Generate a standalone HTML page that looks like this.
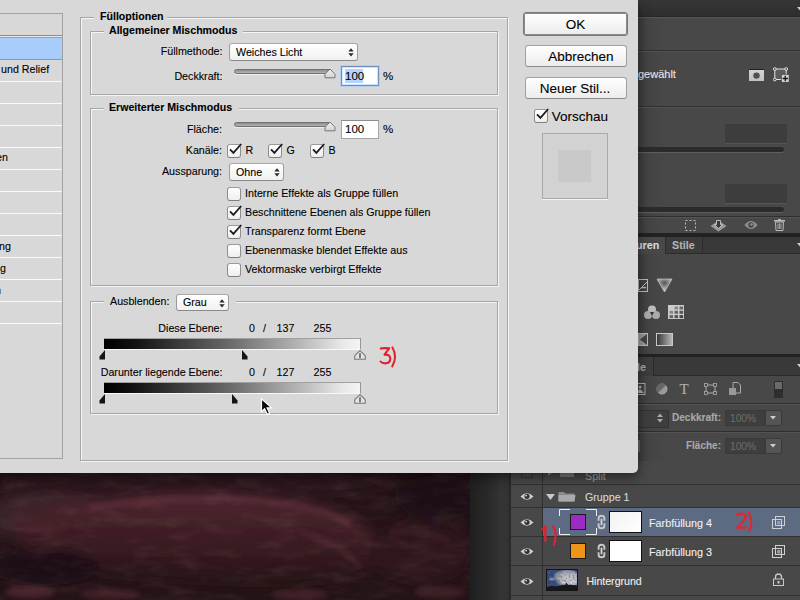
<!DOCTYPE html>
<html><head><meta charset="utf-8"><style>
html,body{margin:0;padding:0;width:800px;height:600px;overflow:hidden;background:#484848;}
body{position:relative;font-family:"Liberation Sans",sans-serif;}
.t{position:absolute;white-space:nowrap;-webkit-text-stroke:0.1px currentColor;}
.r{position:absolute;}
</style></head><body>
<div class="r" style="left:636px;top:0px;width:164px;height:600px;background:linear-gradient(90deg,#3c3c3c 0px,#444 12px,#484848 30px)"></div>
<div class="r" style="left:636px;top:0px;width:164px;height:17px;background:linear-gradient(#363636,#2d2d2d)"></div>
<div class="r" style="left:636px;top:16px;width:164px;height:1px;background:#262626"></div>
<div class="r" style="left:636px;top:17px;width:164px;height:1px;background:#575757"></div>
<div class="r" style="left:636px;top:50px;width:164px;height:1px;background:#2e2e2e"></div>
<div class="r" style="left:636px;top:51px;width:164px;height:1px;background:#545454"></div>
<div class="r" style="left:636px;top:106px;width:164px;height:1px;background:#2e2e2e"></div>
<div class="r" style="left:636px;top:107px;width:164px;height:1px;background:#545454"></div>
<div class="r" style="left:636px;top:216px;width:164px;height:1px;background:#2e2e2e"></div>
<div class="r" style="left:636px;top:217px;width:164px;height:1px;background:#545454"></div>
<svg class="r" style="left:797px;top:7px;" width="7" height="6" viewBox="0 0 7 6"><path d="M0 0 L7 0 L3.5 4 Z" fill="#cfcfcf"/></svg>
<div class="t" style="left:638.00px;top:68.69px;font-size:11px;line-height:11px;font-weight:normal;color:#e6e6e6;font-family:'Liberation Sans', sans-serif;">gewählt</div>
<div class="r" style="left:749px;top:69px;width:15px;height:12px;background:linear-gradient(#d4d4d4,#c2c2c2);border-top:1px solid #222;box-sizing:border-box"></div>
<svg class="r" style="left:752px;top:71px;" width="9" height="9" viewBox="0 0 9 9"><circle cx="4.5" cy="4.6" r="3.2" fill="#505050"/></svg>
<svg class="r" style="left:773px;top:67px;" width="17" height="16" viewBox="0 0 17 16"><rect x="1.8" y="2" width="11.4" height="10.5" fill="#5c5c5c" stroke="#e4e4e4" stroke-width="1"/><circle cx="1.8" cy="2" r="1.4" fill="#484848" stroke="#eee" stroke-width="0.9"/><circle cx="13.2" cy="2" r="1.4" fill="#484848" stroke="#eee" stroke-width="0.9"/><circle cx="1.8" cy="12.5" r="1.4" fill="#484848" stroke="#eee" stroke-width="0.9"/><rect x="8.3" y="7.3" width="7.9" height="8.2" rx="1" fill="#d2d2d2" stroke="#2a2a2a" stroke-width="0.7"/><path d="M12.25 8.8 V14.2 M9.6 11.5 H14.9" stroke="#151515" stroke-width="1.3"/></svg>
<div class="r" style="left:725px;top:124px;width:62px;height:19px;background:#3d3d3d;border-bottom:1px solid #555"></div>
<div class="r" style="left:630px;top:147px;width:154px;height:5px;background:#2b2b2b;border-radius:3px;box-shadow:0 1px 0 #5e5e5e"></div>
<div class="r" style="left:725px;top:184px;width:62px;height:19px;background:#3d3d3d;border-bottom:1px solid #555"></div>
<div class="r" style="left:630px;top:207px;width:154px;height:5px;background:#2b2b2b;border-radius:3px;box-shadow:0 1px 0 #5e5e5e"></div>
<svg class="r" style="left:685px;top:220px;" width="11" height="11" viewBox="0 0 11 11"><rect x="0.5" y="0.5" width="10" height="10" fill="none" stroke="#bbb" stroke-dasharray="2 2"/></svg>
<svg class="r" style="left:710px;top:219px;" width="17" height="13" viewBox="0 0 17 13"><path d="M8.5 1.5 L16.5 7 L8.5 12.5 L0.5 7 Z" fill="#9a9a9a"/><path d="M6.5 1.5 H10.5 V5.5 H12.5 L8.5 9.5 L4.5 5.5 H6.5 Z" fill="#3a3a3a" stroke="#bdbdbd" stroke-width="1"/></svg>
<svg class="r" style="left:744px;top:220px;" width="14" height="10" viewBox="0 0 14 10"><path d="M0.5 5 Q7 -3.2 13.5 5 Q7 13.2 0.5 5Z" fill="#8e8e8e"/><circle cx="7" cy="5" r="2.7" fill="#474747"/><circle cx="7.5" cy="4.5" r="1.3" fill="#8e8e8e"/></svg>
<svg class="r" style="left:774px;top:219px;" width="11" height="12" viewBox="0 0 11 12"><rect x="0" y="1" width="11" height="1.5" fill="#bbb"/><rect x="4" y="0" width="3" height="1.5" fill="#bbb"/><path d="M1.5 3 H9.5 L9 11.5 H2 Z" fill="none" stroke="#bbb"/><path d="M4 4.5 V10 M5.5 4.5 V10 M7 4.5 V10" stroke="#bbb" stroke-width="0.8"/></svg>
<div class="r" style="left:636px;top:233px;width:164px;height:4px;background:#222"></div>
<div class="r" style="left:636px;top:237px;width:164px;height:17px;background:#393939"></div>
<div class="r" style="left:636px;top:253px;width:164px;height:1px;background:#2c2c2c"></div>
<div class="r" style="left:636px;top:237px;width:29px;height:17px;background:#484848"></div>
<div class="r" style="left:665px;top:237px;width:36px;height:16px;background:#3b3b3b;border-left:1px solid #2c2c2c;border-right:1px solid #2c2c2c"></div>
<div class="t" style="left:636.00px;top:239.94px;font-size:10.7px;line-height:10.7px;font-weight:bold;color:#dadada;font-family:'Liberation Sans', sans-serif;">uren</div>
<div class="t" style="left:672.00px;top:239.94px;font-size:10.7px;line-height:10.7px;font-weight:bold;color:#b4b4b4;font-family:'Liberation Sans', sans-serif;">Stile</div>
<svg class="r" style="left:797px;top:243px;" width="7" height="5" viewBox="0 0 7 5"><path d="M0 0 L7 0 L3.5 4 Z" fill="#cfcfcf"/></svg>
<svg class="r" style="left:638px;top:279px;overflow:hidden" width="10" height="13" viewBox="0 0 10 13"><rect x="0.5" y="0.5" width="9" height="12" fill="none" stroke="#bbb"/><path d="M1 11 L9 3" stroke="#bbb"/><rect x="3" y="8" width="5" height="1.3" fill="#bbb"/></svg>
<svg class="r" style="left:656px;top:278px;" width="17" height="15" viewBox="0 0 17 15"><defs><radialGradient id="tg" cx="0.5" cy="0.3" r="0.6"><stop offset="0" stop-color="#555"/><stop offset="1" stop-color="#ccc"/></radialGradient></defs><path d="M1 1 H16 L8.5 14 Z" fill="url(#tg)" stroke="#bbb" stroke-width="0.8"/></svg>
<svg class="r" style="left:643px;top:305px;" width="18" height="15" viewBox="0 0 18 15"><circle cx="9" cy="4.5" r="4" fill="#bbb"/><circle cx="5" cy="10" r="4" fill="#aaa"/><circle cx="13" cy="10" r="4" fill="#aaa"/><path d="M7 7 L11 7 L9 11 Z" fill="#333"/></svg>
<svg class="r" style="left:668px;top:305px;" width="16" height="14" viewBox="0 0 16 14"><rect x="0.5" y="0.5" width="15" height="13" fill="#d0d0d0" stroke="#ccc"/><rect x="1.5" y="1.5" width="3.6" height="3" fill="#c8c8c8"/><rect x="1.5" y="5.8" width="3.6" height="3" fill="#888"/><rect x="1.5" y="10.1" width="3.6" height="3" fill="#666"/><rect x="6.5" y="1.5" width="3.6" height="3" fill="#888"/><rect x="6.5" y="5.8" width="3.6" height="3" fill="#666"/><rect x="6.5" y="10.1" width="3.6" height="3" fill="#555"/><rect x="11.5" y="1.5" width="3.6" height="3" fill="#666"/><rect x="11.5" y="5.8" width="3.6" height="3" fill="#555"/><rect x="11.5" y="10.1" width="3.6" height="3" fill="#444"/></svg>
<svg class="r" style="left:638px;top:333px;overflow:hidden" width="10" height="13" viewBox="0 0 10 13"><rect x="0.5" y="0.5" width="9" height="12" fill="#999" stroke="#bbb"/><path d="M9 1 L2 6.5 L9 12 Z" fill="#444"/></svg>
<svg class="r" style="left:656px;top:333px;" width="17" height="13" viewBox="0 0 17 13"><defs><linearGradient id="gg" x1="0" x2="1"><stop offset="0" stop-color="#333"/><stop offset="1" stop-color="#bbb"/></linearGradient></defs><rect x="0.5" y="0.5" width="16" height="12" fill="url(#gg)" stroke="#c8c8c8"/></svg>
<div class="r" style="left:636px;top:354px;width:164px;height:3px;background:#222"></div>
<div class="r" style="left:636px;top:357px;width:164px;height:19px;background:#393939"></div>
<div class="r" style="left:636px;top:375px;width:164px;height:1px;background:#2a2a2a"></div>
<div class="r" style="left:636px;top:357px;width:17px;height:19px;background:#3d3d3d;border-right:1px solid #2a2a2a"></div>
<div class="t" style="right:154.00px;top:361.94px;font-size:10.7px;line-height:10.7px;font-weight:bold;color:#a8a8a8;text-align:right;font-family:'Liberation Sans', sans-serif;">Stile</div>
<svg class="r" style="left:797px;top:364px;" width="7" height="5" viewBox="0 0 7 5"><path d="M0 0 L7 0 L3.5 4 Z" fill="#cfcfcf"/></svg>
<svg class="r" style="left:638px;top:383px;" width="8" height="12" viewBox="0 0 8 12"><rect x="-5" y="0.5" width="12" height="11" fill="none" stroke="#aaa"/><circle cx="2" cy="4" r="1.5" fill="#aaa"/><path d="M-3 10 L2 6 L6 10Z" fill="#aaa"/></svg>
<svg class="r" style="left:656px;top:383px;" width="12" height="12" viewBox="0 0 12 12"><circle cx="6" cy="6" r="5" fill="#999" stroke="#aaa"/><path d="M10 2 L2 10 A5 5 0 0 1 10 2Z" fill="#666"/></svg>
<div class="t" style="left:679.50px;top:381.80px;font-size:15px;line-height:15px;font-weight:normal;color:#b0b0b0;font-family:'Liberation Serif', serif;">T</div>
<svg class="r" style="left:704px;top:383px;" width="13" height="12" viewBox="0 0 13 12"><rect x="2" y="2" width="9" height="8" fill="none" stroke="#aaa"/><rect x="0.5" y="0.5" width="3" height="3" fill="#484848" stroke="#aaa" stroke-width="0.8"/><rect x="0.5" y="8.5" width="3" height="3" fill="#484848" stroke="#aaa" stroke-width="0.8"/><rect x="9.5" y="0.5" width="3" height="3" fill="#484848" stroke="#aaa" stroke-width="0.8"/><rect x="9.5" y="8.5" width="3" height="3" fill="#484848" stroke="#aaa" stroke-width="0.8"/></svg>
<svg class="r" style="left:729px;top:382px;" width="12" height="13" viewBox="0 0 12 13"><path d="M4 0.5 H9 L11.5 3 V11 H4 Z" fill="none" stroke="#aaa"/><rect x="0" y="6" width="7" height="7" fill="#999"/></svg>
<div class="r" style="left:774px;top:381px;width:9px;height:17px;background:#2e2e2e;border-radius:1px"></div>
<div class="r" style="left:775px;top:382px;width:7px;height:7px;background:#6a6a6a"></div>
<div class="r" style="left:636px;top:403px;width:164px;height:1px;background:#2e2e2e"></div>
<div class="r" style="left:636px;top:404px;width:164px;height:1px;background:#535353"></div>
<div class="r" style="left:636px;top:431px;width:164px;height:1px;background:#2e2e2e"></div>
<div class="r" style="left:636px;top:432px;width:164px;height:1px;background:#535353"></div>
<div class="r" style="left:636px;top:461px;width:164px;height:1px;background:#2e2e2e"></div>
<div class="r" style="left:636px;top:462px;width:164px;height:1px;background:#535353"></div>
<div class="r" style="left:630px;top:410px;width:37px;height:16px;background:#3e3e3e;border:1px solid #333;border-radius:2px"></div>
<svg class="r" style="left:657px;top:413px;" width="6" height="10" viewBox="0 0 6 10"><path d="M0 4 L3 0.5 L6 4 Z M0 6 L3 9.5 L6 6 Z" fill="#aaa"/></svg>
<div class="t" style="right:79.00px;top:412.54px;font-size:10px;line-height:10px;font-weight:bold;color:#a9a9a9;text-align:right;font-family:'Liberation Sans', sans-serif;">Deckkraft:</div>
<div class="r" style="left:725px;top:410px;width:40px;height:16px;background:#3e3e3e;border:1px solid #3a3a3a;box-sizing:border-box"></div>
<div class="r" style="left:765px;top:410px;width:17px;height:16px;background:#555;border:1px solid #3a3a3a;box-sizing:border-box;border-radius:0 2px 2px 0"></div>
<svg class="r" style="left:770px;top:416px;" width="7" height="4" viewBox="0 0 7 4"><path d="M0 0 H6 L3 3.5Z" fill="#ccc"/></svg>
<div class="r" style="left:725px;top:438px;width:40px;height:16px;background:#3e3e3e;border:1px solid #3a3a3a;box-sizing:border-box"></div>
<div class="r" style="left:765px;top:438px;width:17px;height:16px;background:#555;border:1px solid #3a3a3a;box-sizing:border-box;border-radius:0 2px 2px 0"></div>
<svg class="r" style="left:770px;top:444px;" width="7" height="4" viewBox="0 0 7 4"><path d="M0 0 H6 L3 3.5Z" fill="#ccc"/></svg>
<div class="t" style="left:730.00px;top:413.87px;font-size:10.2px;line-height:10.2px;font-weight:normal;color:#6b6b6b;font-family:'Liberation Sans', sans-serif;">100%</div>
<div class="t" style="right:79.00px;top:440.54px;font-size:10px;line-height:10px;font-weight:bold;color:#a9a9a9;text-align:right;font-family:'Liberation Sans', sans-serif;">Fläche:</div>
<div class="t" style="left:730.00px;top:441.87px;font-size:10.2px;line-height:10.2px;font-weight:normal;color:#6b6b6b;font-family:'Liberation Sans', sans-serif;">100%</div>
<div class="r" style="left:636px;top:440px;width:4px;height:12px;background:#666"></div>
<div class="r" style="left:470px;top:472px;width:40px;height:128px;background:linear-gradient(90deg,#1f1f1f,#292929 45%,#353535 80%,#333 95%,#2a2a2a)"></div>
<div class="r" style="left:509px;top:461px;width:2px;height:139px;background:#2a2a2a"></div>
<div class="r" style="left:511px;top:461px;width:289px;height:139px;background:#484848"></div>
<div class="r" style="left:511px;top:484px;width:289px;height:1px;background:#303030"></div>
<div class="r" style="left:511px;top:507px;width:289px;height:1px;background:#303030"></div>
<div class="r" style="left:511px;top:536px;width:289px;height:1px;background:#303030"></div>
<div class="r" style="left:511px;top:565px;width:289px;height:1px;background:#303030"></div>
<div class="r" style="left:511px;top:595px;width:289px;height:1px;background:#303030"></div>
<div class="r" style="left:542px;top:461px;width:1px;height:139px;background:#303030"></div>
<div class="r" style="left:543px;top:508px;width:257px;height:28px;background:#5c6b82"></div>
<div class="r" style="left:521px;top:466px;width:12px;height:12px;border:1px solid #333;box-sizing:border-box"></div>
<svg class="r" style="left:548px;top:467px;" width="7" height="9" viewBox="0 0 7 9"><path d="M0 0 L6 4.5 L0 9Z" fill="#888"/></svg>
<div class="r" style="left:560px;top:467px;width:14px;height:10px;background:#7a7a7a"></div>
<div class="t" style="left:585.00px;top:470.94px;font-size:10.7px;line-height:10.7px;font-weight:normal;color:#a0a0a0;font-family:'Liberation Sans', sans-serif;">Split</div>
<svg class="r" style="left:520px;top:492px;" width="14" height="9" viewBox="0 0 14 9"><path d="M0.5 4.5 Q7 -2 13.5 4.5 Q7 11 0.5 4.5Z" fill="#d0d0d0"/><circle cx="7" cy="4.3" r="2.6" fill="#333"/><circle cx="6.2" cy="3.6" r="0.9" fill="#ddd"/></svg>
<svg class="r" style="left:520px;top:518px;" width="14" height="9" viewBox="0 0 14 9"><path d="M0.5 4.5 Q7 -2 13.5 4.5 Q7 11 0.5 4.5Z" fill="#d0d0d0"/><circle cx="7" cy="4.3" r="2.6" fill="#333"/><circle cx="6.2" cy="3.6" r="0.9" fill="#ddd"/></svg>
<svg class="r" style="left:520px;top:547px;" width="14" height="9" viewBox="0 0 14 9"><path d="M0.5 4.5 Q7 -2 13.5 4.5 Q7 11 0.5 4.5Z" fill="#d0d0d0"/><circle cx="7" cy="4.3" r="2.6" fill="#333"/><circle cx="6.2" cy="3.6" r="0.9" fill="#ddd"/></svg>
<svg class="r" style="left:520px;top:577px;" width="14" height="9" viewBox="0 0 14 9"><path d="M0.5 4.5 Q7 -2 13.5 4.5 Q7 11 0.5 4.5Z" fill="#d0d0d0"/><circle cx="7" cy="4.3" r="2.6" fill="#333"/><circle cx="6.2" cy="3.6" r="0.9" fill="#ddd"/></svg>
<svg class="r" style="left:546px;top:494px;" width="9" height="6" viewBox="0 0 9 6"><path d="M0 0 H9 L4.5 6Z" fill="#c8c8c8"/></svg>
<svg class="r" style="left:558px;top:490px;" width="18" height="12" viewBox="0 0 18 12"><path d="M0.5 2 H6 L7.5 3.5 H16.5 V11.5 H0.5Z" fill="#8a8a8a"/><path d="M0.5 5 H17.5 L16.5 11.5 H0.5Z" fill="#a9a9a9"/></svg>
<div class="t" style="left:585.00px;top:491.94px;font-size:10.7px;line-height:10.7px;font-weight:normal;color:#d6d6d6;font-family:'Liberation Sans', sans-serif;">Gruppe 1</div>
<svg class="r" style="left:559px;top:509px;" width="38" height="26" viewBox="0 0 38 26"><path d="M0.5 7 V0.5 H11 M27 0.5 H37.5 V7 M37.5 19 V25.5 H27 M11 25.5 H0.5 V19" fill="none" stroke="#eee" stroke-width="1"/></svg>
<div class="r" style="left:570px;top:514px;width:16px;height:16px;background:#9b2bc4;border:1px solid #1a1a1a;box-sizing:border-box"></div>
<svg class="r" style="left:596.5px;top:514px;" width="9" height="16" viewBox="0 0 9 16"><path d="M1.6 6.8 V4.6 A2.9 2.9 0 0 1 7.4 4.6 V6.8 M1.6 9.2 V11.4 A2.9 2.9 0 0 0 7.4 11.4 V9.2" fill="none" stroke="#c9c9c9" stroke-width="1.9"/><rect x="3.6" y="4.6" width="1.8" height="6.8" rx="0.9" fill="#d8d8d8"/></svg>
<div class="r" style="left:609px;top:511px;width:33px;height:22px;background:linear-gradient(135deg,#f2f2f2,#ffffff);border:1px solid #111;box-sizing:border-box"></div>
<div class="t" style="left:649.00px;top:517.86px;font-size:10.8px;line-height:10.8px;font-weight:normal;color:#f0f0f0;font-family:'Liberation Sans', sans-serif;">Farbfüllung 4</div>
<div class="r" style="left:570px;top:543px;width:16px;height:16px;background:#ee9418;border:1px solid #1a1a1a;box-sizing:border-box"></div>
<svg class="r" style="left:596.5px;top:543px;" width="9" height="16" viewBox="0 0 9 16"><path d="M1.6 6.8 V4.6 A2.9 2.9 0 0 1 7.4 4.6 V6.8 M1.6 9.2 V11.4 A2.9 2.9 0 0 0 7.4 11.4 V9.2" fill="none" stroke="#c9c9c9" stroke-width="1.9"/><rect x="3.6" y="4.6" width="1.8" height="6.8" rx="0.9" fill="#d8d8d8"/></svg>
<div class="r" style="left:609px;top:540px;width:33px;height:22px;background:#fff;border:1px solid #111;box-sizing:border-box"></div>
<div class="t" style="left:649.00px;top:546.86px;font-size:10.8px;line-height:10.8px;font-weight:normal;color:#f0f0f0;font-family:'Liberation Sans', sans-serif;">Farbfüllung 3</div>
<svg class="r" style="left:772px;top:516px;" width="13" height="13" viewBox="0 0 13 13"><rect x="0.5" y="3.5" width="9" height="9" fill="none" stroke="#d0d0d0"/><rect x="3.5" y="0.5" width="9" height="9" fill="none" stroke="#d0d0d0"/><rect x="5" y="5" width="3.5" height="3.5" fill="#9a9a9a"/></svg>
<svg class="r" style="left:772px;top:545px;" width="13" height="13" viewBox="0 0 13 13"><rect x="0.5" y="3.5" width="9" height="9" fill="none" stroke="#d0d0d0"/><rect x="3.5" y="0.5" width="9" height="9" fill="none" stroke="#d0d0d0"/><rect x="5" y="5" width="3.5" height="3.5" fill="#9a9a9a"/></svg>
<svg class="r" style="left:547px;top:570px" width="30" height="20" viewBox="0 0 30 20"><defs><radialGradient id="sun" cx="0.6" cy="0.5" r="0.5"><stop offset="0" stop-color="#f8f8f8"/><stop offset="0.6" stop-color="#c2c4c8"/><stop offset="1" stop-color="#a0a4ac" stop-opacity="0"/></radialGradient><filter id="tb"><feGaussianBlur stdDeviation="0.6"/></filter><filter id="cn"><feTurbulence type="fractalNoise" baseFrequency="0.5" numOctaves="2" seed="5"/><feColorMatrix values="0 0 0 0 0.12  0 0 0 0 0.14  0 0 0 0 0.2  0 0 0 3 -1.3"/></filter></defs><rect width="30" height="20" fill="#2f4677"/><g filter="url(#tb)"><ellipse cx="19" cy="9" rx="15" ry="10" fill="url(#sun)"/><ellipse cx="19" cy="6" rx="12" ry="6" fill="#a9abb0" opacity="0.6"/><ellipse cx="5" cy="9" rx="3" ry="1.5" fill="#9aa5c0" opacity="0.7"/></g><rect width="30" height="20" filter="url(#cn)" opacity="0.6"/><path d="M0 17 Q5 15.5 9 16.5 Q14 14.5 18 15 L19.5 12.5 L21 14.8 Q26 14.5 30 15.5 V20 H0Z" fill="#17181b"/></svg>
<div class="r" style="left:546px;top:569px;width:32px;height:22px;border:1px solid #141414;box-sizing:border-box"></div>
<div class="t" style="left:586.40px;top:575.53px;font-size:10.6px;line-height:10.6px;font-weight:normal;color:#f0f0f0;font-family:'Liberation Sans', sans-serif;">Hintergrund</div>
<svg class="r" style="left:773px;top:573px;" width="11" height="13" viewBox="0 0 11 13"><path d="M2.5 6 V4 A3 3 0 0 1 8.5 4 V6" fill="none" stroke="#c8c8c8" stroke-width="1.3"/><rect x="0.5" y="6" width="10" height="6.5" fill="none" stroke="#c8c8c8"/><rect x="4.5" y="8" width="2" height="2.5" fill="#c8c8c8"/></svg>
<svg class="r" style="left:730px;top:508px;" width="26" height="28" viewBox="0 0 26 28"><path d="M7 7 Q10 5.3 12.8 5.8 Q16 6.5 15.6 9.8 Q15 12.8 7 19.6 H16" fill="none" stroke="#e8232b" stroke-width="2.2" stroke-linecap="round" stroke-linejoin="round"/><path d="M18.9 4.6 Q23.6 13.5 19.4 23.2" fill="none" stroke="#e8232b" stroke-width="2" stroke-linecap="round"/></svg>
<svg class="r" style="left:536px;top:520px;" width="26" height="28" viewBox="0 0 26 28"><path d="M6.3 9.3 Q8.3 7.3 9.3 6.6 V21" fill="none" stroke="#e4202a" stroke-width="2.3" stroke-linecap="round" stroke-linejoin="round"/><path d="M17 6.3 Q21.8 13 18 24.8" fill="none" stroke="#e4202a" stroke-width="2.2" stroke-linecap="round"/></svg>
<svg class="r" style="left:0;top:472px" width="470" height="128" viewBox="0 0 470 128"><defs><filter id="bl" x="-20%" y="-50%" width="140%" height="200%"><feGaussianBlur stdDeviation="6"/></filter><filter id="bl2" x="-20%" y="-50%" width="140%" height="200%"><feGaussianBlur stdDeviation="2.5"/></filter><linearGradient id="rk" x1="0" y1="0" x2="0" y2="1"><stop offset="0" stop-color="#4f2731"/><stop offset="0.5" stop-color="#3b1d23"/><stop offset="1" stop-color="#261418"/></linearGradient><filter id="nz"><feTurbulence type="fractalNoise" baseFrequency="0.03 0.09" numOctaves="4" seed="3"/><feColorMatrix values="0 0 0 0 0.33  0 0 0 0 0.17  0 0 0 0 0.18  0 0 0 2.4 -1.1"/></filter></defs><rect width="470" height="128" fill="#251417"/><g filter="url(#bl)"><ellipse cx="200" cy="10" rx="200" ry="16" fill="#2c171b"/><ellipse cx="50" cy="45" rx="70" ry="25" fill="#392026"/><path d="M20 40 Q90 26 170 22 Q260 20 330 36 Q380 52 385 85 Q370 110 280 112 Q160 110 80 100 Q30 90 20 70Z" fill="url(#rk)"/><ellipse cx="420" cy="80" rx="50" ry="30" fill="#2e191d"/><ellipse cx="440" cy="25" rx="45" ry="22" fill="#1a0f12"/><ellipse cx="45" cy="95" rx="55" ry="18" fill="#1d1014"/></g><g filter="url(#bl2)" opacity="0.9"><path d="M90 36 Q170 24 250 28 Q320 34 350 52" fill="none" stroke="#5b2e38" stroke-width="5"/><path d="M300 60 Q340 70 360 95" fill="none" stroke="#4f2932" stroke-width="4"/><path d="M390 60 Q420 55 450 70" fill="none" stroke="#44232a" stroke-width="4"/><ellipse cx="30" cy="120" rx="25" ry="6" fill="#4b262e"/><ellipse cx="110" cy="122" rx="30" ry="5" fill="#46242b"/><ellipse cx="300" cy="123" rx="28" ry="5" fill="#44232a"/><ellipse cx="440" cy="120" rx="25" ry="6" fill="#3f2026"/><ellipse cx="40" cy="55" rx="30" ry="6" fill="#47242b"/></g><rect width="470" height="128" filter="url(#nz)" opacity="0.14"/></svg>
<div class="r" style="left:0px;top:0px;width:638px;height:473px;background:#d8d8d8;border-bottom-right-radius:5px;box-shadow:0 4px 12px rgba(0,0,0,0.5)"></div>
<div class="r" style="left:-2px;top:13px;width:65px;height:446px;border:1px solid #a2a2a2;box-sizing:border-box"></div>
<div class="r" style="left:0px;top:35px;width:62px;height:1px;background:#8e8e8e"></div>
<div class="r" style="left:0px;top:36px;width:62px;height:1px;background:#e6e6e6"></div>
<div class="r" style="left:0px;top:37px;width:62px;height:1px;background:#84a6d6"></div>
<div class="r" style="left:0px;top:38px;width:62px;height:21px;background:#a8cdfa"></div>
<div class="r" style="left:0px;top:59px;width:62px;height:1px;background:#7c9bc8"></div>
<div class="r" style="left:0px;top:81px;width:62px;height:1px;background:#fafafa"></div>
<div class="r" style="left:0px;top:103px;width:62px;height:1px;background:#fafafa"></div>
<div class="r" style="left:0px;top:125px;width:62px;height:1px;background:#fafafa"></div>
<div class="r" style="left:0px;top:147px;width:62px;height:1px;background:#fafafa"></div>
<div class="r" style="left:0px;top:169px;width:62px;height:1px;background:#fafafa"></div>
<div class="r" style="left:0px;top:191px;width:62px;height:1px;background:#fafafa"></div>
<div class="r" style="left:0px;top:213px;width:62px;height:1px;background:#fafafa"></div>
<div class="r" style="left:0px;top:235px;width:62px;height:1px;background:#fafafa"></div>
<div class="r" style="left:0px;top:257px;width:62px;height:1px;background:#fafafa"></div>
<div class="r" style="left:0px;top:279px;width:62px;height:1px;background:#fafafa"></div>
<div class="r" style="left:0px;top:301px;width:62px;height:1px;background:#fafafa"></div>
<div class="r" style="left:0px;top:323px;width:62px;height:1px;background:#fafafa"></div>
<div class="t" style="left:1.00px;top:63.94px;font-size:10.7px;line-height:10.7px;font-weight:normal;color:#000;font-family:'Liberation Sans', sans-serif;">und Relief</div>
<div class="t" style="right:792.00px;top:151.94px;font-size:10.7px;line-height:10.7px;font-weight:normal;color:#000;text-align:right;font-family:'Liberation Sans', sans-serif;">Schatten nach innen</div>
<div class="t" style="right:789.00px;top:240.94px;font-size:10.7px;line-height:10.7px;font-weight:normal;color:#000;text-align:right;font-family:'Liberation Sans', sans-serif;">Farbüberlagerung</div>
<div class="t" style="right:794.00px;top:262.94px;font-size:10.7px;line-height:10.7px;font-weight:normal;color:#000;text-align:right;font-family:'Liberation Sans', sans-serif;">Verlaufsüberlagerung</div>
<div class="t" style="right:799.00px;top:284.94px;font-size:10.7px;line-height:10.7px;font-weight:normal;color:#000;text-align:right;font-family:'Liberation Sans', sans-serif;">Schlagschatten</div>
<div class="r" style="left:81px;top:18px;width:428px;height:444px;border:1px solid #f6f6f6;box-sizing:border-box"></div>
<div class="r" style="left:80px;top:17px;width:428px;height:444px;border:1px solid #a6a6a6;box-sizing:border-box"></div>
<div class="r" style="left:94px;top:16px;width:73px;height:4px;background:#d8d8d8"></div>
<div class="t" style="left:100.00px;top:11.03px;font-size:10.6px;line-height:10.6px;font-weight:bold;color:#000;font-family:'Liberation Sans', sans-serif;">Fülloptionen</div>
<div class="r" style="left:91px;top:32px;width:408px;height:64px;border:1px solid #f6f6f6;box-sizing:border-box"></div>
<div class="r" style="left:90px;top:31px;width:408px;height:64px;border:1px solid #a6a6a6;box-sizing:border-box"></div>
<div class="r" style="left:104px;top:30px;width:139px;height:4px;background:#d8d8d8"></div>
<div class="t" style="left:109.00px;top:25.03px;font-size:10.6px;line-height:10.6px;font-weight:bold;color:#000;font-family:'Liberation Sans', sans-serif;">Allgemeiner Mischmodus</div>
<div class="r" style="left:91px;top:109px;width:408px;height:178px;border:1px solid #f6f6f6;box-sizing:border-box"></div>
<div class="r" style="left:90px;top:108px;width:408px;height:178px;border:1px solid #a6a6a6;box-sizing:border-box"></div>
<div class="r" style="left:104px;top:107px;width:135px;height:4px;background:#d8d8d8"></div>
<div class="t" style="left:109.00px;top:102.03px;font-size:10.6px;line-height:10.6px;font-weight:bold;color:#000;font-family:'Liberation Sans', sans-serif;">Erweiterter Mischmodus</div>
<div class="r" style="left:91px;top:302px;width:408px;height:113px;border:1px solid #f6f6f6;box-sizing:border-box"></div>
<div class="r" style="left:90px;top:301px;width:408px;height:113px;border:1px solid #a6a6a6;box-sizing:border-box"></div>
<div class="r" style="left:104px;top:300px;width:132px;height:4px;background:#d8d8d8"></div>
<div class="t" style="right:577.50px;top:45.94px;font-size:10.7px;line-height:10.7px;font-weight:normal;color:#000;text-align:right;font-family:'Liberation Sans', sans-serif;">Füllmethode:</div>
<div class="r" style="left:229px;top:43px;width:129px;height:18px;border:1px solid #9b9b9b;border-top-color:#a8a8a8;border-bottom-color:#8a8a8a;border-radius:3px;box-sizing:border-box;background:linear-gradient(#ffffff,#f1f1f1)"></div>
<div class="t" style="left:236.00px;top:46.64px;font-size:10.7px;line-height:10.7px;font-weight:normal;color:#000;font-family:'Liberation Sans', sans-serif;">Weiches Licht</div>
<svg class="r" style="left:347.5px;top:47.5px;" width="6" height="9" viewBox="0 0 6 9"><path d="M0.3 3.4 L3 0.2 L5.7 3.4Z M0.3 5.3 L3 8.5 L5.7 5.3Z" fill="#2a2a2a"/></svg>
<div class="t" style="right:577.50px;top:70.94px;font-size:10.7px;line-height:10.7px;font-weight:normal;color:#000;text-align:right;font-family:'Liberation Sans', sans-serif;">Deckkraft:</div>
<div class="r" style="left:234px;top:69px;width:98px;height:5px;border-radius:2.5px;border:1px solid #727272;box-sizing:border-box;background:linear-gradient(#8c8c8c,#b4b4b4);box-shadow:0 1px 0 #ededed"></div>
<svg class="r" style="left:324px;top:68px;" width="12" height="11" viewBox="0 0 12 11"><defs><linearGradient id="th" x1="0" y1="0" x2="0" y2="1"><stop offset="0" stop-color="#f2f2f2"/><stop offset="1" stop-color="#d2d2d2"/></linearGradient></defs><path d="M1 9.8 V6.2 L6 1 L11 6.2 V9.8 Z" fill="url(#th)" stroke="#777" stroke-width="1" stroke-linejoin="round"/></svg>
<div class="r" style="left:341px;top:66px;width:38px;height:20px;border:1px solid #6f8fbf;box-shadow:0 0 0 1px #b3cff2, inset 0 0 0 1px #d2e3f8;background:#fff;box-sizing:border-box"></div>
<div class="r" style="left:345px;top:69px;width:18px;height:14px;background:#b3d4fc"></div>
<div class="t" style="left:345.00px;top:71.27px;font-size:11.5px;line-height:11.5px;font-weight:normal;color:#000;font-family:'Liberation Sans', sans-serif;">100</div>
<div class="t" style="left:383.00px;top:71.27px;font-size:11.5px;line-height:11.5px;font-weight:normal;color:#000;font-family:'Liberation Sans', sans-serif;">%</div>
<div class="t" style="right:578.00px;top:123.94px;font-size:10.7px;line-height:10.7px;font-weight:normal;color:#000;text-align:right;font-family:'Liberation Sans', sans-serif;">Fläche:</div>
<div class="r" style="left:234px;top:122px;width:98px;height:5px;border-radius:2.5px;border:1px solid #727272;box-sizing:border-box;background:linear-gradient(#8c8c8c,#b4b4b4);box-shadow:0 1px 0 #ededed"></div>
<svg class="r" style="left:324px;top:121px;" width="12" height="11" viewBox="0 0 12 11"><defs><linearGradient id="th" x1="0" y1="0" x2="0" y2="1"><stop offset="0" stop-color="#f2f2f2"/><stop offset="1" stop-color="#d2d2d2"/></linearGradient></defs><path d="M1 9.8 V6.2 L6 1 L11 6.2 V9.8 Z" fill="url(#th)" stroke="#777" stroke-width="1" stroke-linejoin="round"/></svg>
<div class="r" style="left:341px;top:120px;width:38px;height:19px;border:1px solid #a5a5a5;border-top-color:#8c8c8c;background:#fff;box-sizing:border-box"></div>
<div class="t" style="left:345.00px;top:124.27px;font-size:11.5px;line-height:11.5px;font-weight:normal;color:#000;font-family:'Liberation Sans', sans-serif;">100</div>
<div class="t" style="left:383.00px;top:124.27px;font-size:11.5px;line-height:11.5px;font-weight:normal;color:#000;font-family:'Liberation Sans', sans-serif;">%</div>
<div class="t" style="right:578.00px;top:144.94px;font-size:10.7px;line-height:10.7px;font-weight:normal;color:#000;text-align:right;font-family:'Liberation Sans', sans-serif;">Kanäle:</div>
<div class="r" style="left:227px;top:144px;width:14px;height:14px;border:1px solid #8e8e8e;border-top-color:#9a9a9a;border-bottom-color:#7e7e7e;border-radius:3px;box-sizing:border-box;background:linear-gradient(#fefefe,#efefef)"></div>
<svg class="r" style="left:228px;top:141px;" width="14" height="15" viewBox="0 0 14 15"><path d="M2 8.4 L5.4 11.9 L13.2 3.0" fill="none" stroke="#1c1c1c" stroke-width="1.8" stroke-linejoin="miter" stroke-linecap="butt"/></svg>
<div class="t" style="left:245.50px;top:144.94px;font-size:10.7px;line-height:10.7px;font-weight:normal;color:#000;font-family:'Liberation Sans', sans-serif;">R</div>
<div class="r" style="left:268px;top:144px;width:14px;height:14px;border:1px solid #8e8e8e;border-top-color:#9a9a9a;border-bottom-color:#7e7e7e;border-radius:3px;box-sizing:border-box;background:linear-gradient(#fefefe,#efefef)"></div>
<svg class="r" style="left:269px;top:141px;" width="14" height="15" viewBox="0 0 14 15"><path d="M2 8.4 L5.4 11.9 L13.2 3.0" fill="none" stroke="#1c1c1c" stroke-width="1.8" stroke-linejoin="miter" stroke-linecap="butt"/></svg>
<div class="t" style="left:286.50px;top:144.94px;font-size:10.7px;line-height:10.7px;font-weight:normal;color:#000;font-family:'Liberation Sans', sans-serif;">G</div>
<div class="r" style="left:310px;top:144px;width:14px;height:14px;border:1px solid #8e8e8e;border-top-color:#9a9a9a;border-bottom-color:#7e7e7e;border-radius:3px;box-sizing:border-box;background:linear-gradient(#fefefe,#efefef)"></div>
<svg class="r" style="left:311px;top:141px;" width="14" height="15" viewBox="0 0 14 15"><path d="M2 8.4 L5.4 11.9 L13.2 3.0" fill="none" stroke="#1c1c1c" stroke-width="1.8" stroke-linejoin="miter" stroke-linecap="butt"/></svg>
<div class="t" style="left:328.50px;top:144.94px;font-size:10.7px;line-height:10.7px;font-weight:normal;color:#000;font-family:'Liberation Sans', sans-serif;">B</div>
<div class="t" style="right:578.00px;top:165.94px;font-size:10.7px;line-height:10.7px;font-weight:normal;color:#000;text-align:right;font-family:'Liberation Sans', sans-serif;">Aussparung:</div>
<div class="r" style="left:229px;top:163px;width:55px;height:18px;border:1px solid #9b9b9b;border-top-color:#a8a8a8;border-bottom-color:#8a8a8a;border-radius:3px;box-sizing:border-box;background:linear-gradient(#ffffff,#f1f1f1)"></div>
<div class="t" style="left:236.00px;top:166.64px;font-size:10.7px;line-height:10.7px;font-weight:normal;color:#000;font-family:'Liberation Sans', sans-serif;">Ohne</div>
<svg class="r" style="left:273.5px;top:167.5px;" width="6" height="9" viewBox="0 0 6 9"><path d="M0.3 3.4 L3 0.2 L5.7 3.4Z M0.3 5.3 L3 8.5 L5.7 5.3Z" fill="#2a2a2a"/></svg>
<div class="r" style="left:227px;top:187px;width:14px;height:14px;border:1px solid #8e8e8e;border-top-color:#9a9a9a;border-bottom-color:#7e7e7e;border-radius:3px;box-sizing:border-box;background:linear-gradient(#fefefe,#efefef)"></div>
<div class="t" style="left:245.00px;top:187.74px;font-size:10.7px;line-height:10.7px;font-weight:normal;color:#000;font-family:'Liberation Sans', sans-serif;">Interne Effekte als Gruppe füllen</div>
<div class="r" style="left:227px;top:206px;width:14px;height:14px;border:1px solid #8e8e8e;border-top-color:#9a9a9a;border-bottom-color:#7e7e7e;border-radius:3px;box-sizing:border-box;background:linear-gradient(#fefefe,#efefef)"></div>
<svg class="r" style="left:228px;top:203px;" width="14" height="15" viewBox="0 0 14 15"><path d="M2 8.4 L5.4 11.9 L13.2 3.0" fill="none" stroke="#1c1c1c" stroke-width="1.8" stroke-linejoin="miter" stroke-linecap="butt"/></svg>
<div class="t" style="left:245.00px;top:206.74px;font-size:10.7px;line-height:10.7px;font-weight:normal;color:#000;font-family:'Liberation Sans', sans-serif;">Beschnittene Ebenen als Gruppe füllen</div>
<div class="r" style="left:227px;top:225px;width:14px;height:14px;border:1px solid #8e8e8e;border-top-color:#9a9a9a;border-bottom-color:#7e7e7e;border-radius:3px;box-sizing:border-box;background:linear-gradient(#fefefe,#efefef)"></div>
<svg class="r" style="left:228px;top:222px;" width="14" height="15" viewBox="0 0 14 15"><path d="M2 8.4 L5.4 11.9 L13.2 3.0" fill="none" stroke="#1c1c1c" stroke-width="1.8" stroke-linejoin="miter" stroke-linecap="butt"/></svg>
<div class="t" style="left:245.00px;top:225.74px;font-size:10.7px;line-height:10.7px;font-weight:normal;color:#000;font-family:'Liberation Sans', sans-serif;">Transparenz formt Ebene</div>
<div class="r" style="left:227px;top:244px;width:14px;height:14px;border:1px solid #8e8e8e;border-top-color:#9a9a9a;border-bottom-color:#7e7e7e;border-radius:3px;box-sizing:border-box;background:linear-gradient(#fefefe,#efefef)"></div>
<div class="t" style="left:245.00px;top:244.74px;font-size:10.7px;line-height:10.7px;font-weight:normal;color:#000;font-family:'Liberation Sans', sans-serif;">Ebenenmaske blendet Effekte aus</div>
<div class="r" style="left:227px;top:263px;width:14px;height:14px;border:1px solid #8e8e8e;border-top-color:#9a9a9a;border-bottom-color:#7e7e7e;border-radius:3px;box-sizing:border-box;background:linear-gradient(#fefefe,#efefef)"></div>
<div class="t" style="left:245.00px;top:263.74px;font-size:10.7px;line-height:10.7px;font-weight:normal;color:#000;font-family:'Liberation Sans', sans-serif;">Vektormaske verbirgt Effekte</div>
<div class="t" style="left:110.00px;top:295.94px;font-size:10.7px;line-height:10.7px;font-weight:normal;color:#000;font-family:'Liberation Sans', sans-serif;">Ausblenden:</div>
<div class="r" style="left:176px;top:294px;width:53px;height:17px;border:1px solid #9b9b9b;border-top-color:#a8a8a8;border-bottom-color:#8a8a8a;border-radius:3px;box-sizing:border-box;background:linear-gradient(#ffffff,#f1f1f1)"></div>
<div class="t" style="left:183.00px;top:296.64px;font-size:10.7px;line-height:10.7px;font-weight:normal;color:#000;font-family:'Liberation Sans', sans-serif;">Grau</div>
<svg class="r" style="left:218.5px;top:298.5px;" width="6" height="9" viewBox="0 0 6 9"><path d="M0.3 3.4 L3 0.2 L5.7 3.4Z M0.3 5.3 L3 8.5 L5.7 5.3Z" fill="#2a2a2a"/></svg>
<div class="t" style="right:577.50px;top:322.94px;font-size:10.7px;line-height:10.7px;font-weight:normal;color:#000;text-align:right;font-family:'Liberation Sans', sans-serif;">Diese Ebene:</div>
<div class="t" style="left:249.00px;top:322.94px;font-size:10.7px;line-height:10.7px;font-weight:normal;color:#000;font-family:'Liberation Sans', sans-serif;">0</div>
<div class="t" style="left:263.00px;top:322.94px;font-size:10.7px;line-height:10.7px;font-weight:normal;color:#000;font-family:'Liberation Sans', sans-serif;">/</div>
<div class="t" style="left:276.50px;top:322.94px;font-size:10.7px;line-height:10.7px;font-weight:normal;color:#000;font-family:'Liberation Sans', sans-serif;">137</div>
<div class="t" style="left:313.50px;top:322.94px;font-size:10.7px;line-height:10.7px;font-weight:normal;color:#000;font-family:'Liberation Sans', sans-serif;">255</div>
<div class="r" style="left:104px;top:338px;width:257px;height:12px;background:linear-gradient(90deg,#000 0%,#121212 12%,#6c6c6c 50%,#b2b2b2 75%,#e8e8e8 93%,#f4f4f4 100%);border-top:1px solid #a0a0a0;border-right:1px solid #959595;border-bottom:1px solid #f8f8f8;box-sizing:border-box"></div>
<svg class="r" style="left:99px;top:350px;" width="7" height="10" viewBox="0 0 7 10"><path d="M6 0 L0.5 6.5 V9.5 H6 Z" fill="#151515"/></svg>
<svg class="r" style="left:240.5px;top:350px;" width="7" height="10" viewBox="0 0 7 10"><path d="M1 0 L6.5 6.5 V9.5 H1 Z" fill="#151515"/></svg>
<svg class="r" style="left:353.5px;top:349.8px;" width="12" height="10" viewBox="0 0 12 10"><path d="M0.7 9.3 V6.5 Q0.7 5.8 1.3 5.2 L6 0.6 L10.7 5.2 Q11.3 5.8 11.3 6.5 V9.3 Z" fill="#e4e4e4" stroke="#777" stroke-width="1.1" stroke-linejoin="round"/><path d="M6 3.2 V8.2" stroke="#222" stroke-width="1.1"/></svg>
<div class="t" style="right:577.50px;top:366.94px;font-size:10.7px;line-height:10.7px;font-weight:normal;color:#000;text-align:right;font-family:'Liberation Sans', sans-serif;">Darunter liegende Ebene:</div>
<div class="t" style="left:249.00px;top:366.94px;font-size:10.7px;line-height:10.7px;font-weight:normal;color:#000;font-family:'Liberation Sans', sans-serif;">0</div>
<div class="t" style="left:263.00px;top:366.94px;font-size:10.7px;line-height:10.7px;font-weight:normal;color:#000;font-family:'Liberation Sans', sans-serif;">/</div>
<div class="t" style="left:276.50px;top:366.94px;font-size:10.7px;line-height:10.7px;font-weight:normal;color:#000;font-family:'Liberation Sans', sans-serif;">127</div>
<div class="t" style="left:313.50px;top:366.94px;font-size:10.7px;line-height:10.7px;font-weight:normal;color:#000;font-family:'Liberation Sans', sans-serif;">255</div>
<div class="r" style="left:104px;top:382px;width:257px;height:12px;background:linear-gradient(90deg,#000 0%,#121212 12%,#6c6c6c 50%,#b2b2b2 75%,#e8e8e8 93%,#f4f4f4 100%);border-top:1px solid #a0a0a0;border-right:1px solid #959595;border-bottom:1px solid #f8f8f8;box-sizing:border-box"></div>
<svg class="r" style="left:99px;top:394px;" width="7" height="10" viewBox="0 0 7 10"><path d="M6 0 L0.5 6.5 V9.5 H6 Z" fill="#151515"/></svg>
<svg class="r" style="left:230.5px;top:394px;" width="7" height="10" viewBox="0 0 7 10"><path d="M1 0 L6.5 6.5 V9.5 H1 Z" fill="#151515"/></svg>
<svg class="r" style="left:353.5px;top:393.8px;" width="12" height="10" viewBox="0 0 12 10"><path d="M0.7 9.3 V6.5 Q0.7 5.8 1.3 5.2 L6 0.6 L10.7 5.2 Q11.3 5.8 11.3 6.5 V9.3 Z" fill="#e4e4e4" stroke="#777" stroke-width="1.1" stroke-linejoin="round"/><path d="M6 3.2 V8.2" stroke="#222" stroke-width="1.1"/></svg>
<svg class="r" style="left:374px;top:342px;" width="28" height="28" viewBox="0 0 28 28"><path d="M6.8 6.6 Q9 5.8 15.2 6.4 L10.5 12.6 Q16.3 12.3 16.3 16.6 Q16.3 21.4 11.2 21.4 Q8.2 21.4 6.6 19.6" fill="none" stroke="#e2222a" stroke-width="2.1" stroke-linecap="round" stroke-linejoin="round"/><path d="M18.4 5.4 Q23.8 14.5 18.2 24.4" fill="none" stroke="#e2222a" stroke-width="2" stroke-linecap="round"/></svg>
<div class="r" style="left:523px;top:12px;width:105px;height:24px;border:1px solid #7a7a7a;box-shadow:inset 0 0 0 1px #8a8a8a;border-radius:3px;box-sizing:border-box;background:linear-gradient(#ffffff,#ececec)"></div>
<div class="t" style="left:565.80px;top:18.17px;font-size:13.5px;line-height:13.5px;font-weight:normal;color:#000;font-family:'Liberation Sans', sans-serif;">OK</div>
<div class="r" style="left:525px;top:45px;width:102px;height:22px;border:1px solid #a0a0a0;border-bottom-color:#8a8a8a;border-radius:3px;box-sizing:border-box;background:linear-gradient(#ffffff,#ececec)"></div>
<div class="t" style="left:548.30px;top:50.17px;font-size:13.5px;line-height:13.5px;font-weight:normal;color:#000;font-family:'Liberation Sans', sans-serif;">Abbrechen</div>
<div class="r" style="left:525px;top:77px;width:102px;height:22px;border:1px solid #a0a0a0;border-bottom-color:#8a8a8a;border-radius:3px;box-sizing:border-box;background:linear-gradient(#ffffff,#ececec)"></div>
<div class="t" style="left:539.70px;top:82.17px;font-size:13.5px;line-height:13.5px;font-weight:normal;color:#000;font-family:'Liberation Sans', sans-serif;">Neuer Stil...</div>
<div class="r" style="left:534px;top:109px;width:14px;height:14px;border:1px solid #8e8e8e;border-top-color:#9a9a9a;border-bottom-color:#7e7e7e;border-radius:3px;box-sizing:border-box;background:linear-gradient(#fefefe,#efefef)"></div>
<svg class="r" style="left:535px;top:106px;" width="14" height="15" viewBox="0 0 14 15"><path d="M2 8.4 L5.4 11.9 L13.2 3.0" fill="none" stroke="#1c1c1c" stroke-width="1.8" stroke-linejoin="miter" stroke-linecap="butt"/></svg>
<div class="t" style="left:551.70px;top:110.17px;font-size:13.5px;line-height:13.5px;font-weight:normal;color:#000;font-family:'Liberation Sans', sans-serif;">Vorschau</div>
<div class="r" style="left:542px;top:133px;width:66px;height:66px;border:1px solid #a9a9a9;background:#d2d2d2;box-sizing:border-box;box-shadow:0 1px 0 #f4f4f4"></div>
<div class="r" style="left:558px;top:150px;width:33px;height:32px;background:#c9c9c9"></div>
<svg class="r" style="left:259px;top:397px;" width="16" height="20" viewBox="0 0 16 20"><path d="M2.5 1.8 V14.6 L5.6 11.7 L8.2 17.3 L10.6 16.3 L8.1 10.9 H12.6 Z" fill="#0a0a0a" stroke="#fff" stroke-width="1.2" stroke-linejoin="miter"/></svg>
</body></html>
